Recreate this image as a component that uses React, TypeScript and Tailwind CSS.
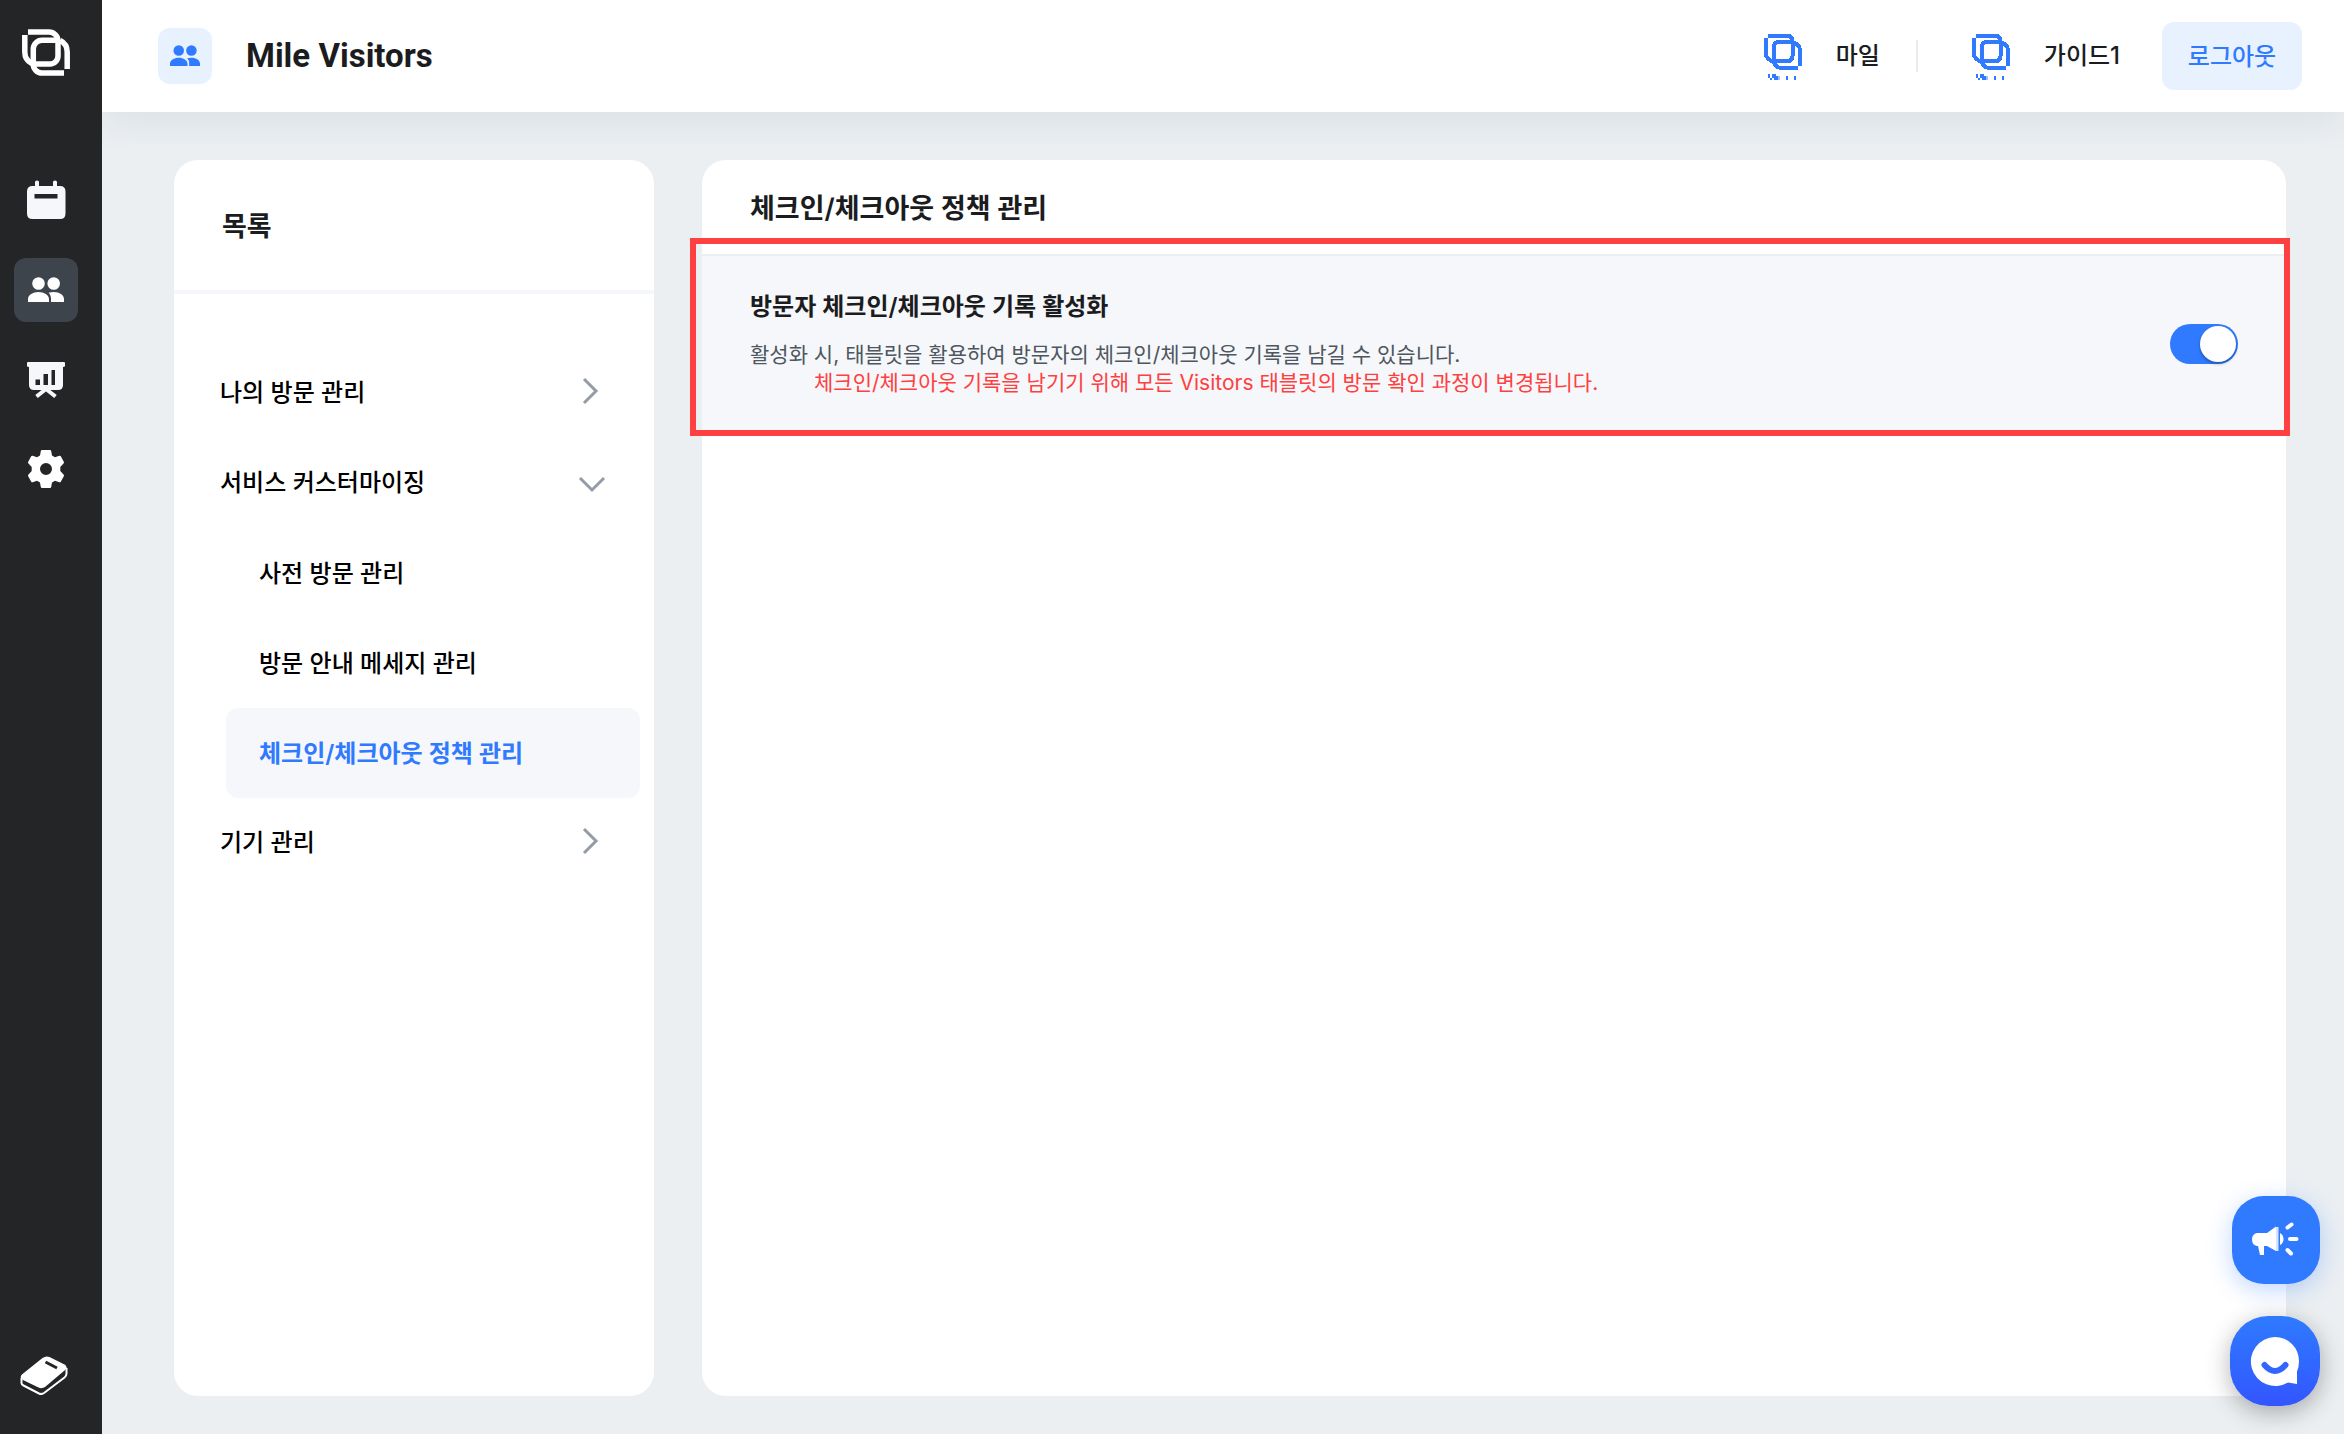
import { useId, useState } from "react";

type IconProps = { className?: string };

function LogoMark({ className }: IconProps) {
  return (
    <svg viewBox="0 0 48 48" className={className} fill="none" stroke="currentColor" strokeWidth="5.5" strokeLinejoin="round" aria-hidden="true">
      <path d="M6 4H27a9 9 0 0 1 9 9V28a8 8 0 0 1-8 8H12" />
      <path d="M2.8 7V24q0 8 7 11.500" />
      <path d="M42 45H20a8.700 8.700 0 0 1-8.700-8.700V21a8.700 8.700 0 0 1 8.700-8.700H34" />
      <path d="M45.200 41V24q0-8-7-11.500" />
    </svg>
  );
}

function CompanyLogo() {
  return (
    <svg viewBox="0 0 72 72" className="size-[72px] text-[#2f7aff]" fill="none" stroke="currentColor" strokeWidth="4" shapeRendering="crispEdges" aria-hidden="true">
      <path d="M22 16H42q4 0 4.500 5V36q0 5-5 5H27" />
      <path d="M20 18V34q0 5 8 8" />
      <path d="M52 48H34q-6-2-6-8V27q0-5 5-5H44q10 1 10 9V46" />
      <g fill="currentColor" stroke="none">
        <path d="M22 54h2v4h-2zM24 58h2v2h-2zM26 54h4v2h2v4h-4v-2h-2zM40 56h2v4h-2zM48 56h2v4h-2z" />
        <path fill="#9cc0ff" d="M32 56h2v4h-2z" />
      </g>
    </svg>
  );
}

function CalendarIcon() {
  return (
    <svg viewBox="0 0 40 40" className="size-10" aria-hidden="true">
      <path fill="#f5f7fa" d="M9 2q0-1.500 2-1.500t2 1.500v4h14V2q0-1.500 2-1.500T31 2v4h3q5.500 0 5.500 5.500v22Q39.500 39 34 39H6.500Q1 39 1 33.500v-22Q1 6 6.500 6H9z" />
      <path fill="#242527" d="M8.500 14h23v4.500h-23z" />
    </svg>
  );
}

function UsersIcon({ className }: IconProps) {
  return (
    <svg viewBox="0 0 36 26" className={className} fill="currentColor" aria-hidden="true">
      <circle cx="10.500" cy="6.500" r="6.300" />
      <circle cx="25.700" cy="6.500" r="6.300" />
      <path d="M0 25v-3c0-4 5-7 10.500-7S21 18 21 22v3zM23 25v-3.500c0-2.500-1-4.500-2.500-5.800C22 15.200 24 15 25.700 15 31.500 15 36 18 36 22v3z" />
    </svg>
  );
}

function BoardIcon() {
  return (
    <svg viewBox="0 0 38 38" className="size-[38px]" aria-hidden="true">
      <path fill="#f5f7fa" d="M1 1h36q1 0 1 1v3q0 1-2 1v18q0 5-5 5H7q-5 0-5-5V6Q0 6 0 5V2q0-1 1-1z" />
      <path d="M19 28L9.500 35.500M19 28l9.500 7.500" stroke="#f5f7fa" strokeWidth="4" fill="none" />
      <path fill="#242527" d="M8.500 18.500h4.500v5.500H8.500zM16.500 13h4.500v11h-4.500zM24.500 9H28v15h-3.500z" />
    </svg>
  );
}

function GearIcon() {
  return (
    <svg viewBox="0 0 36 38" className="mb-[2px] h-[38px] w-9" aria-hidden="true">
      <path
        fill="#fff"
        fillRule="evenodd"
        d="M14 0h8q1 0 1.200 1L24 5.500l3 1.700 4.300-1.400q1-.300 1.500.500l3 5.500q.500 1-.300 1.700L32.300 17v4l3.200 3.500q.800.700.300 1.700l-3 5.500q-.500.800-1.500.500L27 30.800l-3 1.700-.800 4.500q-.200 1-1.200 1h-8q-1 0-1.200-1L12 32.500l-3-1.700-4.300 1.400q-1 .300-1.500-.500l-3-5.500q-.500-1 .300-1.700L3.700 21v-4L.500 13.500q-.800-.700-.300-1.700l3-5.500q.500-.800 1.500-.500L9 7.200l3-1.700.800-4.500q.200-1 1.200-1zM18 13a6 6 0 1 0 0 12 6 6 0 0 0 0-12z"
      />
    </svg>
  );
}

function EraserIcon() {
  return (
    <svg viewBox="0 0 48 40" className="h-10 w-12" fill="none" aria-hidden="true">
      <path fill="#fff" d="M22.500 2q3.500-2.500 7-1l15 7.500q4 2.500 0 6L25 31q-3 2-6.500.500L3 24q-4.500-2.500-.500-6z" />
      <path stroke="#fff" strokeWidth="2" d="M1.500 22v5q0 1.500 2 2.500L19 37.500q2.500 1.200 5-.500L44.500 21.500q2-1.500 2-4V12" />
      <path stroke="#242527" strokeWidth="3" d="M25.500 6L37 12" />
    </svg>
  );
}

function Chevron({ open }: { open: boolean }) {
  return open ? (
    <svg viewBox="0 0 28 28" className="-mr-[2px] size-7" fill="none" stroke="#949ca6" strokeWidth="3" aria-hidden="true">
      <path d="M2 9l12 12 12-12" />
    </svg>
  ) : (
    <svg viewBox="0 0 28 28" className="mb-1 size-7" fill="none" stroke="#949ca6" strokeWidth="3" aria-hidden="true">
      <path d="M8 2l12 12-12 12" />
    </svg>
  );
}

function MegaphoneIcon() {
  return (
    <svg viewBox="0 0 48 36" className="mr-[2px] h-9 w-12" aria-hidden="true">
      <path fill="#fff" d="M6 11h10l9-6.500V29L16 24h-3v9H9l-2-9H6q-5-1-5-6.500T6 11z" />
      <path fill="#d6e4ff" d="M25 5h2.500v24H25z" />
      <path fill="#fff" d="M29 11q3.500 2 3.500 6T29 23z" />
      <path stroke="#fff" strokeWidth="4" strokeLinecap="round" d="M36.500 5.500l4-3M39 17h6.500M36.500 28l3.500 3.500" />
    </svg>
  );
}

function ChatIcon() {
  return (
    <svg viewBox="0 0 50 50" className="size-[50px]" aria-hidden="true">
      <path fill="#fff" d="M25 1a24 24 0 0 1 24 24q0 6-2 10.500V48l-9-1.500A24.500 24.500 0 1 1 25 1z" />
      <path fill="none" stroke="#3366ff" strokeWidth="6" strokeLinecap="round" d="M14.500 29q10.500 12 21 0" />
    </svg>
  );
}

const navTiles = [
  { label: "캘린더", icon: <CalendarIcon />, active: false },
  { label: "방문자", icon: <UsersIcon className="h-[26px] w-9" />, active: true },
  { label: "리포트", icon: <BoardIcon />, active: false },
  { label: "설정", icon: <GearIcon />, active: false },
];

const menu = [
  { label: "나의 방문 관리", open: false, children: [] },
  {
    label: "서비스 커스터마이징",
    open: true,
    children: ["사전 방문 관리", "방문 안내 메세지 관리", "체크인/체크아웃 정책 관리"],
  },
  { label: "기기 관리", open: false, children: [] },
];

const activeItem = "체크인/체크아웃 정책 관리";

function SideBar() {
  return (
    <nav className="relative z-10 flex w-[102px] shrink-0 flex-col bg-[#242527] pt-7 pb-[38px] pl-[14px] text-white">
      <a href="#home" aria-label="홈" className="flex w-16 justify-center">
        <LogoMark className="size-12" />
      </a>
      <div className="mt-[92px] flex flex-col gap-[26px]">
        {navTiles.map((tile) => (
          <a
            key={tile.label}
            href="#nav"
            aria-label={tile.label}
            className={
              tile.active
                ? "flex size-16 items-center justify-center rounded-xl bg-[#3d444b]"
                : "flex size-16 items-center justify-center rounded-xl"
            }
          >
            {tile.icon}
          </a>
        ))}
      </div>
      <button type="button" aria-label="지우개" className="mt-auto flex w-15 justify-center">
        <EraserIcon />
      </button>
    </nav>
  );
}

function Header() {
  return (
    <header className="relative flex h-28 shrink-0 items-center bg-white pr-[42px] pl-14 shadow-[0_8px_36px_rgba(36,50,60,0.08)]">
      <span className="flex h-14 w-[54px] items-center justify-center rounded-xl bg-[#e8f2ff] text-[#2f7aff]">
        <UsersIcon className="h-[22px] w-[30px]" />
      </span>
      <h1 className="ml-[34px] font-[Roboto,sans-serif] text-[33px] leading-10 font-bold">Mile Visitors</h1>
      <div className="ml-auto flex items-center text-2xl font-medium">
        <CompanyLogo />
        <span className="ml-[18px]">마일</span>
        <span className="ml-9 h-8 w-[2px] bg-[#e9ebed]" />
        <span className="ml-9">
          <CompanyLogo />
        </span>
        <span className="ml-[18px]">가이드1</span>
        <button type="button" className="ml-[42px] h-[68px] w-[140px] rounded-xl bg-[#e8f2ff] pt-[2px] font-medium text-[#2f7aff]">
          로그아웃
        </button>
      </div>
    </header>
  );
}

function MenuCard() {
  return (
    <aside className="w-[480px] shrink-0 rounded-3xl bg-white">
      <h2 className="flex h-[134px] items-center border-b-4 border-[#f5f7fa] px-12 pt-1 text-[27px] font-semibold">목록</h2>
      <ul className="pt-[54px] text-2xl font-medium text-black">
        {menu.map((group) => (
          <li key={group.label}>
            <button type="button" aria-expanded={group.open} className="flex h-[90px] w-full items-center justify-between pr-[50px] pl-[46px]">
              {group.label}
              <Chevron open={group.open} />
            </button>
            {group.children.length > 0 && (
              <ul className="mr-[14px] ml-[52px]">
                {group.children.map((child) => (
                  <li key={child}>
                    <a
                      href="#menu"
                      className={
                        child === activeItem
                          ? "flex h-[90px] items-center rounded-xl bg-[#f5f7fa] px-[33px] pt-[2px] font-semibold text-[#2f7aff]"
                          : "flex h-[90px] items-center px-[33px] pt-[2px]"
                      }
                    >
                      {child}
                    </a>
                  </li>
                ))}
              </ul>
            )}
          </li>
        ))}
      </ul>
    </aside>
  );
}

function PolicyCard() {
  const [enabled, setEnabled] = useState(true);
  const toggleId = useId();
  return (
    <section className="min-w-0 flex-1 rounded-3xl bg-white">
      <h2 className="flex h-24 items-center border-b-2 border-[#eceff2] px-12 pt-1 text-[27px] font-semibold">체크인/체크아웃 정책 관리</h2>
      <div className="relative flex h-44 items-center justify-between bg-[#f5f7fa] px-12">
        <div className="pb-[2px]">
          <label htmlFor={toggleId} className="block text-2xl leading-9 font-semibold">
            방문자 체크인/체크아웃 기록 활성화
          </label>
          <p className="mt-4 text-[21px] leading-7 text-[#4e565e]">활성화 시, 태블릿을 활용하여 방문자의 체크인/체크아웃 기록을 남길 수 있습니다.</p>
          <p className="pl-16 text-[21px] leading-7 text-[#ff4040]">체크인/체크아웃 기록을 남기기 위해 모든 Visitors 태블릿의 방문 확인 과정이 변경됩니다.</p>
        </div>
        <input
          id={toggleId}
          type="checkbox"
          role="switch"
          checked={enabled}
          onChange={(e) => setEnabled(e.target.checked)}
          className="flex h-10 w-[68px] shrink-0 cursor-pointer appearance-none items-center rounded-full bg-[#c5cbd1] p-[2px] before:block before:size-9 before:rounded-full before:bg-white before:shadow-[0_2px_3px_rgba(0,0,0,0.3)] checked:justify-end checked:bg-[#2f7aff]"
        />
        <div className="pointer-events-none absolute -top-[18px] -right-1 -bottom-1 -left-3 border-6 border-[#ff4040]" />
      </div>
    </section>
  );
}

export default function App() {
  return (
    <div className="flex min-h-screen bg-[#ebeff2] font-[Inter,'Noto_Sans_CJK_KR',sans-serif] text-[#1b1c1e]">
      <SideBar />
      <div className="flex min-w-0 flex-1 flex-col">
        <Header />
        <main className="flex flex-1 gap-12 pt-12 pr-[58px] pb-[38px] pl-[72px]">
          <MenuCard />
          <PolicyCard />
        </main>
      </div>
      <div className="fixed right-6 bottom-7 flex flex-col items-end gap-8">
        <button
          type="button"
          aria-label="공지사항"
          className="flex size-[88px] items-center justify-center rounded-[32px] bg-[#2f7aff] shadow-[0_6px_24px_rgba(47,122,255,0.3)]"
        >
          <MegaphoneIcon />
        </button>
        <button
          type="button"
          aria-label="채팅 상담"
          className="flex size-[90px] items-center justify-center rounded-[38px] bg-linear-to-b from-[#2f7aff] to-[#3355ff] shadow-[0_6px_24px_rgba(0,0,0,0.3)]"
        >
          <ChatIcon />
        </button>
      </div>
    </div>
  );
}
